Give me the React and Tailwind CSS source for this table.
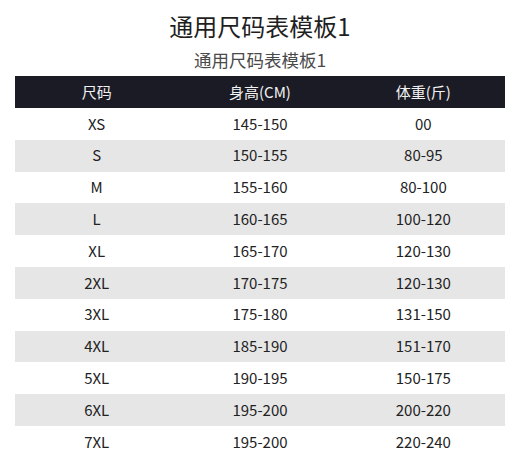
const rows = [
  ['XS', '145-150', '00'],
  ['S', '150-155', '80-95'],
  ['M', '155-160', '80-100'],
  ['L', '160-165', '100-120'],
  ['XL', '165-170', '120-130'],
  ['2XL', '170-175', '120-130'],
  ['3XL', '175-180', '131-150'],
  ['4XL', '185-190', '151-170'],
  ['5XL', '190-195', '150-175'],
  ['6XL', '195-200', '200-220'],
  ['7XL', '195-200', '220-240'],
];

export default function App() {
  return (
    <div
      className="w-[520px] h-[474px] bg-white overflow-hidden"
      style={{ fontFamily: '"Noto Sans CJK SC", "Noto Sans", sans-serif' }}
    >
      <h1 className="pt-[9px] text-center text-[24px] leading-[34px] text-[#1f1f1f]">
        通用尺码表模板1
      </h1>
      <p className="mt-[6px] text-center text-[17.5px] leading-[22px] text-[#4a4a4a]">
        通用尺码表模板1
      </p>
      <div className="mx-[15px] mt-[5px]">
        <div className="grid grid-cols-3 h-[32px] items-center bg-[#1b1b25] text-[15px] text-[#f2f2f2]">
          <div className="text-center">尺码</div>
          <div className="text-center">身高(CM)</div>
          <div className="text-center">体重(斤)</div>
        </div>
        {rows.map((row, i) => (
          <div
            key={row[0]}
            className={`grid grid-cols-3 h-[31.8px] items-center text-[15px] text-[#222] ${
              i % 2 === 1 ? 'bg-[#e6e6e6]' : 'bg-white'
            }`}
          >
            {row.map((cell, j) => (
              <div key={j} className="text-center">
                {cell}
              </div>
            ))}
          </div>
        ))}
      </div>
    </div>
  );
}
